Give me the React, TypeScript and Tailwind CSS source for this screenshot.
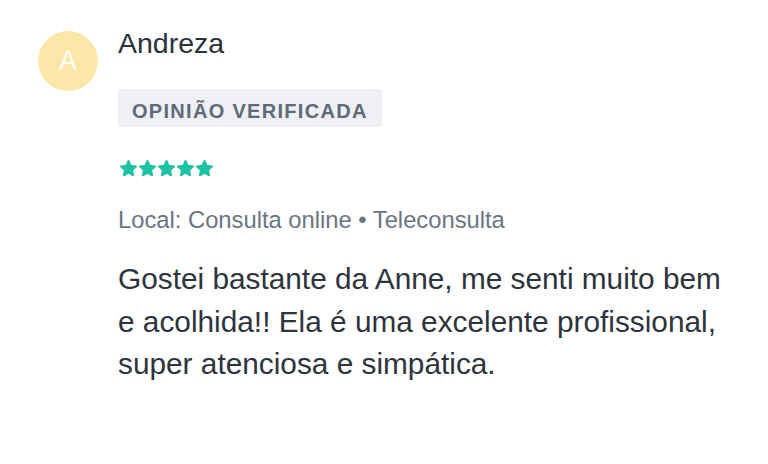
const Star = () => (
  <svg viewBox="0 0 24 24" className="w-[19px] h-[19px]" fill="#1ec2a4">
    <path
      d="M12 2.5l2.9 6.1 6.6.8-4.9 4.6 1.3 6.6L12 17.3l-5.9 3.3 1.3-6.6-4.9-4.6 6.6-.8z"
      stroke="#1ec2a4"
      strokeWidth="2.4"
      strokeLinejoin="round"
    />
  </svg>
);

export default function App() {
  return (
    <div className="w-[768px] h-[464px] bg-white flex pl-[38px] pt-[31px] font-['Liberation_Sans',Arial,sans-serif]">
      <div className="w-[60px] h-[60px] rounded-full bg-[#fbe7a8] text-white text-[27px] flex items-center justify-center shrink-0">
        A
      </div>
      <div className="ml-[20px] -mt-[6px] flex flex-col items-start">
        <div className="text-[28.5px] leading-[36px] text-[#2b313b]">Andreza</div>
        <div className="mt-[28px] bg-[#eef0f3] rounded-[4px] pl-[14px] pr-[14px] pt-[11px] pb-[5px] text-[20px] leading-[22px] font-bold tracking-[1.3px] text-[#5f6a79]">
          OPINIÃO VERIFICADA
        </div>
        <div className="mt-[32px] flex ml-[1px]">
          <Star />
          <Star />
          <Star />
          <Star />
          <Star />
        </div>
        <div className="mt-[28px] text-[23.75px] leading-[28px] text-[#6b7582]">
          Local: Consulta online • Teleconsulta
        </div>
        <p className="mt-[24px] w-[620px] text-[29.8px] leading-[42.5px] text-[#2e343d]">
          Gostei bastante da Anne, me senti muito bem e acolhida!! Ela é uma excelente profissional, super atenciosa e simpática.
        </p>
      </div>
    </div>
  );
}
